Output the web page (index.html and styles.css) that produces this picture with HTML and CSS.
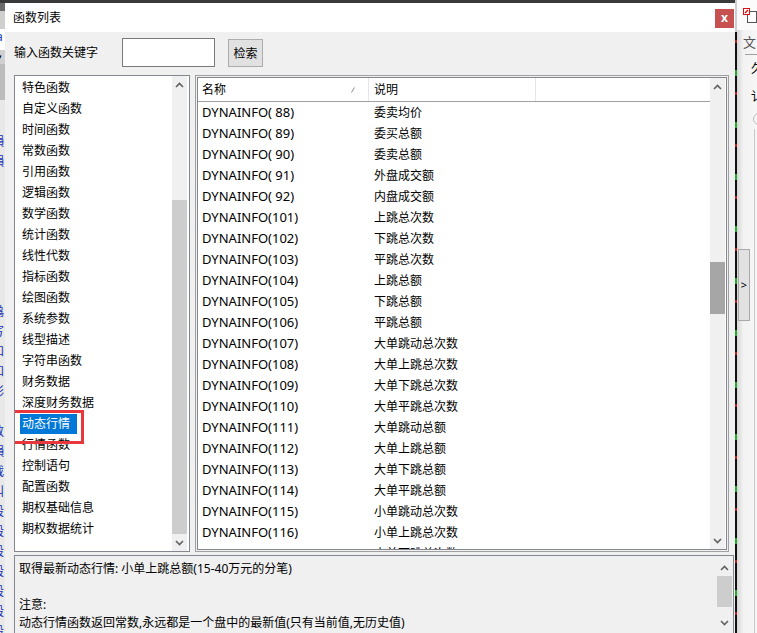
FILE: index.html
```html
<!DOCTYPE html>
<html lang="zh-CN">
<head>
    <meta charset="utf-8">
    <title>函数列表</title>
    <link rel="stylesheet" href="styles.css">
</head>
<body>
<div class="desk">
    <!-- 뒤쪽 창 (왼쪽 조각) -->
    <div class="back-left">
        <div class="bl-icons"><span class="bl-a">a</span></div>
        <div class="bl-drop">▾</div>
        <div class="bl-tool"></div>
        <div class="bl-lines">
            <span>韻</span><span>韻</span>
            <span class="gap">n</span><span>n</span><span>骉</span><span>写</span><span>和</span><span>和</span><span>彩</span><span class="dark">r</span><span>数</span>
            <span>韻</span><span>载</span><span>叫</span><span>段</span><span>段</span><span>段</span><span>段</span><span>段</span><span>段</span><span>段</span>
        </div>
    </div>

    <div class="dialog">
        <div class="title-bar">
            <span class="title">函数列表</span>
            <div class="close-btn">x</div>
        </div>

        <div class="dialog-body">
            <div class="search-row">
                <span class="search-label">输入函数关键字</span>
                <input class="search-input" type="text">
                <button class="search-btn">检索</button>
            </div>

            <div class="lists-row">
                <div class="cat-list">
                    <ul class="cat-items">
                        <li>特色函数</li>
                        <li>自定义函数</li>
                        <li>时间函数</li>
                        <li>常数函数</li>
                        <li>引用函数</li>
                        <li>逻辑函数</li>
                        <li>数学函数</li>
                        <li>统计函数</li>
                        <li>线性代数</li>
                        <li>指标函数</li>
                        <li>绘图函数</li>
                        <li>系统参数</li>
                        <li>线型描述</li>
                        <li>字符串函数</li>
                        <li>财务数据</li>
                        <li>深度财务数据</li>
                        <li><span class="selected">动态行情</span></li>
                        <li>行情函数</li>
                        <li>控制语句</li>
                        <li>配置函数</li>
                        <li>期权基础信息</li>
                        <li>期权数据统计</li>
                    </ul>
                    <div class="vscroll">
                        <div class="vs-btn"><svg width="9" height="6" viewBox="0 0 9 6"><path d="M1 5 L4.5 1.5 L8 5" fill="none" stroke="#606060" stroke-width="1.6"/></svg></div>
                        <div class="vs-track"><div class="vs-thumb cat-thumb"></div></div>
                        <div class="vs-btn"><svg width="9" height="6" viewBox="0 0 9 6"><path d="M1 1 L4.5 4.5 L8 1" fill="none" stroke="#606060" stroke-width="1.6"/></svg></div>
                    </div>
                </div>

                <div class="func-frame">
                    <div class="func-list">
                        <div class="func-table">
                            <div class="func-head">
                                <div class="col-name">名称<svg class="sort-mark" width="4" height="6" viewBox="0 0 4 6"><path d="M0.5 5.5 L3.5 0.5" stroke="#8a8a8a" stroke-width="1"/></svg></div>
                                <div class="col-desc">说明</div>
                            </div>
                            <div class="func-rows">
                                <div class="func-row"><span class="col-name">DYNAINFO( 88)</span><span class="col-desc">委卖均价</span></div>
                                <div class="func-row"><span class="col-name">DYNAINFO( 89)</span><span class="col-desc">委买总额</span></div>
                                <div class="func-row"><span class="col-name">DYNAINFO( 90)</span><span class="col-desc">委卖总额</span></div>
                                <div class="func-row"><span class="col-name">DYNAINFO( 91)</span><span class="col-desc">外盘成交额</span></div>
                                <div class="func-row"><span class="col-name">DYNAINFO( 92)</span><span class="col-desc">内盘成交额</span></div>
                                <div class="func-row"><span class="col-name">DYNAINFO(101)</span><span class="col-desc">上跳总次数</span></div>
                                <div class="func-row"><span class="col-name">DYNAINFO(102)</span><span class="col-desc">下跳总次数</span></div>
                                <div class="func-row"><span class="col-name">DYNAINFO(103)</span><span class="col-desc">平跳总次数</span></div>
                                <div class="func-row"><span class="col-name">DYNAINFO(104)</span><span class="col-desc">上跳总额</span></div>
                                <div class="func-row"><span class="col-name">DYNAINFO(105)</span><span class="col-desc">下跳总额</span></div>
                                <div class="func-row"><span class="col-name">DYNAINFO(106)</span><span class="col-desc">平跳总额</span></div>
                                <div class="func-row"><span class="col-name">DYNAINFO(107)</span><span class="col-desc">大单跳动总次数</span></div>
                                <div class="func-row"><span class="col-name">DYNAINFO(108)</span><span class="col-desc">大单上跳总次数</span></div>
                                <div class="func-row"><span class="col-name">DYNAINFO(109)</span><span class="col-desc">大单下跳总次数</span></div>
                                <div class="func-row"><span class="col-name">DYNAINFO(110)</span><span class="col-desc">大单平跳总次数</span></div>
                                <div class="func-row"><span class="col-name">DYNAINFO(111)</span><span class="col-desc">大单跳动总额</span></div>
                                <div class="func-row"><span class="col-name">DYNAINFO(112)</span><span class="col-desc">大单上跳总额</span></div>
                                <div class="func-row"><span class="col-name">DYNAINFO(113)</span><span class="col-desc">大单下跳总额</span></div>
                                <div class="func-row"><span class="col-name">DYNAINFO(114)</span><span class="col-desc">大单平跳总额</span></div>
                                <div class="func-row"><span class="col-name">DYNAINFO(115)</span><span class="col-desc">小单跳动总次数</span></div>
                                <div class="func-row"><span class="col-name">DYNAINFO(116)</span><span class="col-desc">小单上跳总次数</span></div>
                                <div class="func-row"><span class="col-name">DYNAINFO(117)</span><span class="col-desc">小单下跳总次数</span></div>
                            </div>
                        </div>
                        <div class="vscroll">
                            <div class="vs-btn"><svg width="9" height="6" viewBox="0 0 9 6"><path d="M1 5 L4.5 1.5 L8 5" fill="none" stroke="#606060" stroke-width="1.6"/></svg></div>
                            <div class="vs-track"><div class="vs-thumb func-thumb"></div></div>
                            <div class="vs-btn"><svg width="9" height="6" viewBox="0 0 9 6"><path d="M1 1 L4.5 4.5 L8 1" fill="none" stroke="#606060" stroke-width="1.6"/></svg></div>
                        </div>
                    </div>
                </div>
            </div>

            <div class="desc-box">
                <div class="desc-text">
                    <p>取得最新动态行情: 小单上跳总额(15-40万元的分笔)</p>
                    <p>&nbsp;</p>
                    <p>注意:</p>
                    <p>动态行情函数返回常数,永远都是一个盘中的最新值(只有当前值,无历史值)</p>
                </div>
                <div class="vscroll desc-scroll">
                    <div class="vs-btn"><svg width="9" height="6" viewBox="0 0 9 6"><path d="M1 5 L4.5 1.5 L8 5" fill="none" stroke="#606060" stroke-width="1.6"/></svg></div>
                    <div class="vs-track"><div class="vs-thumb desc-thumb"></div></div>
                    <div class="vs-btn"><svg width="9" height="6" viewBox="0 0 9 6"><path d="M1 1 L4.5 4.5 L8 1" fill="none" stroke="#606060" stroke-width="1.6"/></svg></div>
                </div>
            </div>
        </div>
    </div>

    <!-- 뒤쪽 창 (오른쪽 조각) -->
    <div class="back-right">
        <div class="br-stripe"></div>
        <div class="br-panel">
            <div class="br-head">
                <svg width="14" height="16" viewBox="0 0 14 16">
                    <rect x="4.5" y="3.5" width="9" height="11" fill="#fff" stroke="#555"/>
                    <rect x="0.5" y="0.5" width="6" height="6" fill="#fff" stroke="#e01010"/>
                    <path d="M2 5 L5 2" stroke="#e01010" stroke-width="1.4"/>
                </svg>
            </div>
            <div class="br-tab">文</div>
            <div class="br-rule"></div>
            <div class="br-text">久</div>
            <div class="br-text">讠</div>
            <div class="br-radio"></div>
            <div class="br-group">
                <div class="br-arrow">&gt;</div>
            </div>
        </div>
    </div>
</div>
</body>
</html>
```

FILE: styles.css
```css
*, *::before, *::after {
    box-sizing: border-box;
}

body {
    margin: 0;
    font-family: "Noto Sans", "Noto Sans CJK SC", sans-serif;
    font-size: 12px;
    color: #000;
}

.desk {
    display: flex;
    width: 757px;
    height: 633px;
    overflow: hidden;
    background-color: #3a3a3a;
}

/* 뒤쪽 창 - 왼쪽 */
.back-left {
    width: 5px;
    margin-top: 3px;
    display: flex;
    flex-direction: column;
    overflow: hidden;
    background-color: #e8e8e8;
}

.bl-icons {
    flex-shrink: 0;
    height: 47px;
    background: linear-gradient(to bottom, #6b6b6b 0 8px, #cfcfcf 8px 26px, #fff 26px);
    position: relative;
}

.bl-a {
    position: absolute;
    left: -4px;
    top: 25px;
    color: #2040c0;
    font-size: 12px;
}

.bl-drop {
    flex-shrink: 0;
    height: 14px;
    line-height: 14px;
    font-size: 9px;
    margin-left: -3px;
    background-color: #d0d0d0;
}

.bl-tool {
    flex-shrink: 0;
    height: 36px;
    background-color: #bcbcbc;
}

.bl-lines {
    display: flex;
    flex-direction: column;
    margin-left: -8px;
    padding-top: 32px;
    color: #1a2fb0;
    line-height: 20px;
}

.bl-lines .gap {
    margin-top: 90px;
}

.bl-lines .dark {
    color: #111;
    font-weight: bold;
}

/* 대화상자 */
.dialog {
    width: 730px;
    margin-top: 3px;
    display: flex;
    flex-direction: column;
    background-color: #f0f0f0;
    overflow: hidden;
}

.title-bar {
    flex-shrink: 0;
    height: 29px;
    display: flex;
    justify-content: space-between;
    align-items: flex-start;
    padding: 0 1px 0 8px;
    background-color: #fff;
}

.title {
    margin-top: 7px;
    line-height: 16px;
}

.close-btn {
    width: 19px;
    height: 19px;
    margin-top: 6px;
    background-color: #c75050;
    color: #fff;
    font-weight: bold;
    font-size: 12px;
    line-height: 17px;
    text-align: center;
}

.dialog-body {
    flex-shrink: 0;
    padding: 6px 1px 0 9px;
}

.search-row {
    display: flex;
    align-items: flex-start;
    height: 29px;
}

.search-label {
    width: 108px;
    line-height: 29px;
}

.search-input {
    width: 93px;
    height: 29px;
    margin: 0;
    border: 1px solid #7a7a7a;
    background-color: #fff;
    outline: none;
}

.search-btn {
    width: 35px;
    height: 28px;
    margin: 1px 0 0 13px;
    padding: 0;
    border: 1px solid #adadad;
    background-color: #e1e1e1;
    font-family: inherit;
    font-size: 12px;
    color: #000;
}

.lists-row {
    display: flex;
    gap: 5px;
    margin-top: 8px;
    height: 477px;
}

/* 공통 스크롤바 */
.vscroll {
    width: 15px;
    display: flex;
    flex-direction: column;
    background-color: #f0f0f0;
}

.vs-btn {
    flex-shrink: 0;
    height: 17px;
    display: flex;
    align-items: center;
    justify-content: center;
}

.vs-track {
    flex: 1;
    display: flex;
    flex-direction: column;
}

.vs-thumb {
    flex-shrink: 0;
    background-color: #cdcdcd;
}

.cat-thumb {
    margin-top: 107px;
    flex: 1;
}

.func-thumb {
    margin-top: 167px;
    height: 52px;
    background-color: #a6a6a6;
}

.desc-thumb {
    height: 31px;
}

/* 분류 목록 */
.cat-list {
    width: 176px;
    display: flex;
    border: 1px solid #828790;
    background-color: #fff;
}

.cat-items {
    flex: 1;
    margin: 0;
    padding: 1px 0 0 5px;
    list-style: none;
    overflow: hidden;
}

.cat-items li {
    height: 21px;
    line-height: 21px;
    padding-left: 2px;
}

.cat-items .selected {
    position: relative;
    display: inline-block;
    height: 20px;
    line-height: 20px;
    margin-left: -2px;
    padding: 0 7px 0 2px;
    background-color: #0078d7;
    color: #fff;
}

.cat-items .selected::after {
    content: "";
    position: absolute;
    left: -8px;
    top: -4px;
    width: 72px;
    height: 34px;
    border: 3px solid #e8383d;
}

.cat-list .vscroll {
    margin-right: 2px;
}

/* 함수 목록 */
.func-frame {
    width: 534px;
    padding: 1px;
    border: 1px solid #a0a0a0;
    background-color: #f0f0f0;
}

.func-list {
    height: 100%;
    display: flex;
    border: 1px solid #828790;
    background-color: #fff;
}

.func-list .vscroll {
    margin-right: 1px;
}

.func-table {
    flex: 1;
    overflow: hidden;
}

.func-head {
    display: flex;
    height: 24px;
    line-height: 23px;
    border-bottom: 1px solid #a0a0a0;
}

.func-head .col-name {
    position: relative;
    width: 171px;
    padding-left: 4px;
    border-right: 1px solid #e5e5e5;
}

.func-head .col-desc {
    width: 167px;
    padding-left: 5px;
    border-right: 1px solid #e5e5e5;
}

.sort-mark {
    position: absolute;
    right: 13px;
    top: 9px;
}

.func-row {
    display: flex;
    height: 21px;
    line-height: 21px;
}

.func-row .col-name {
    width: 171px;
    padding-left: 4px;
    font-size: 13px;
    white-space: pre;
}

.func-row .col-desc {
    padding-left: 5px;
}

/* 설명 */
.desc-box {
    display: flex;
    width: 720px;
    height: 82px;
    margin-top: 3px;
    border: 1px solid #828790;
    background-color: #f0f0f0;
}

.desc-text {
    flex: 1;
    padding: 4px 0 0 4px;
}

.desc-text p {
    margin: 0;
    line-height: 18px;
}

.desc-scroll {
    padding-top: 3px;
    margin-right: 1px;
}

.desc-scroll .vs-track {
    flex: none;
    height: 38px;
}

/* 뒤쪽 창 - 오른쪽 */
.back-right {
    width: 22px;
    display: flex;
}

.br-stripe {
    width: 2px;
    background:
        linear-gradient(to bottom, #cfcfcf 0 32px, transparent 32px),
        repeating-linear-gradient(to bottom, #111 0 18px, #1fa82a 18px 24px, #111 24px 40px, #b02020 40px 43px, #111 43px 52px);
}

.br-panel {
    flex: 1;
    display: flex;
    flex-direction: column;
    background: linear-gradient(to right, #d6d6d6, #f2f2f2 6px, #f7f7f7);
    overflow: hidden;
}

.br-head {
    flex-shrink: 0;
    height: 30px;
    padding: 8px 0 0 6px;
    background-color: #fbfbfb;
}

.br-tab {
    flex-shrink: 0;
    height: 20px;
    padding-left: 6px;
    margin-top: 2px;
    line-height: 20px;
    font-size: 13px;
    color: #555;
}

.br-rule {
    flex-shrink: 0;
    height: 1px;
    margin: 2px 0 0 8px;
    background-color: #a0a0a0;
}

.br-text {
    flex-shrink: 0;
    height: 28px;
    padding-left: 14px;
    line-height: 28px;
    font-size: 12px;
}

.br-radio {
    flex-shrink: 0;
    width: 12px;
    height: 12px;
    margin: 2px 0 0 16px;
    border: 1px solid #bbb;
    border-radius: 50%;
}

.br-group {
    flex: 1;
    margin: 4px 2px 0 0;
    padding-top: 120px;
    border-right: 1px solid #c8c8c8;
}

.br-arrow {
    width: 12px;
    height: 72px;
    margin-left: 1px;
    border: 1px solid #a8a8a8;
    background-color: #e2e2e2;
    line-height: 70px;
    text-align: center;
    font-size: 11px;
}
```
